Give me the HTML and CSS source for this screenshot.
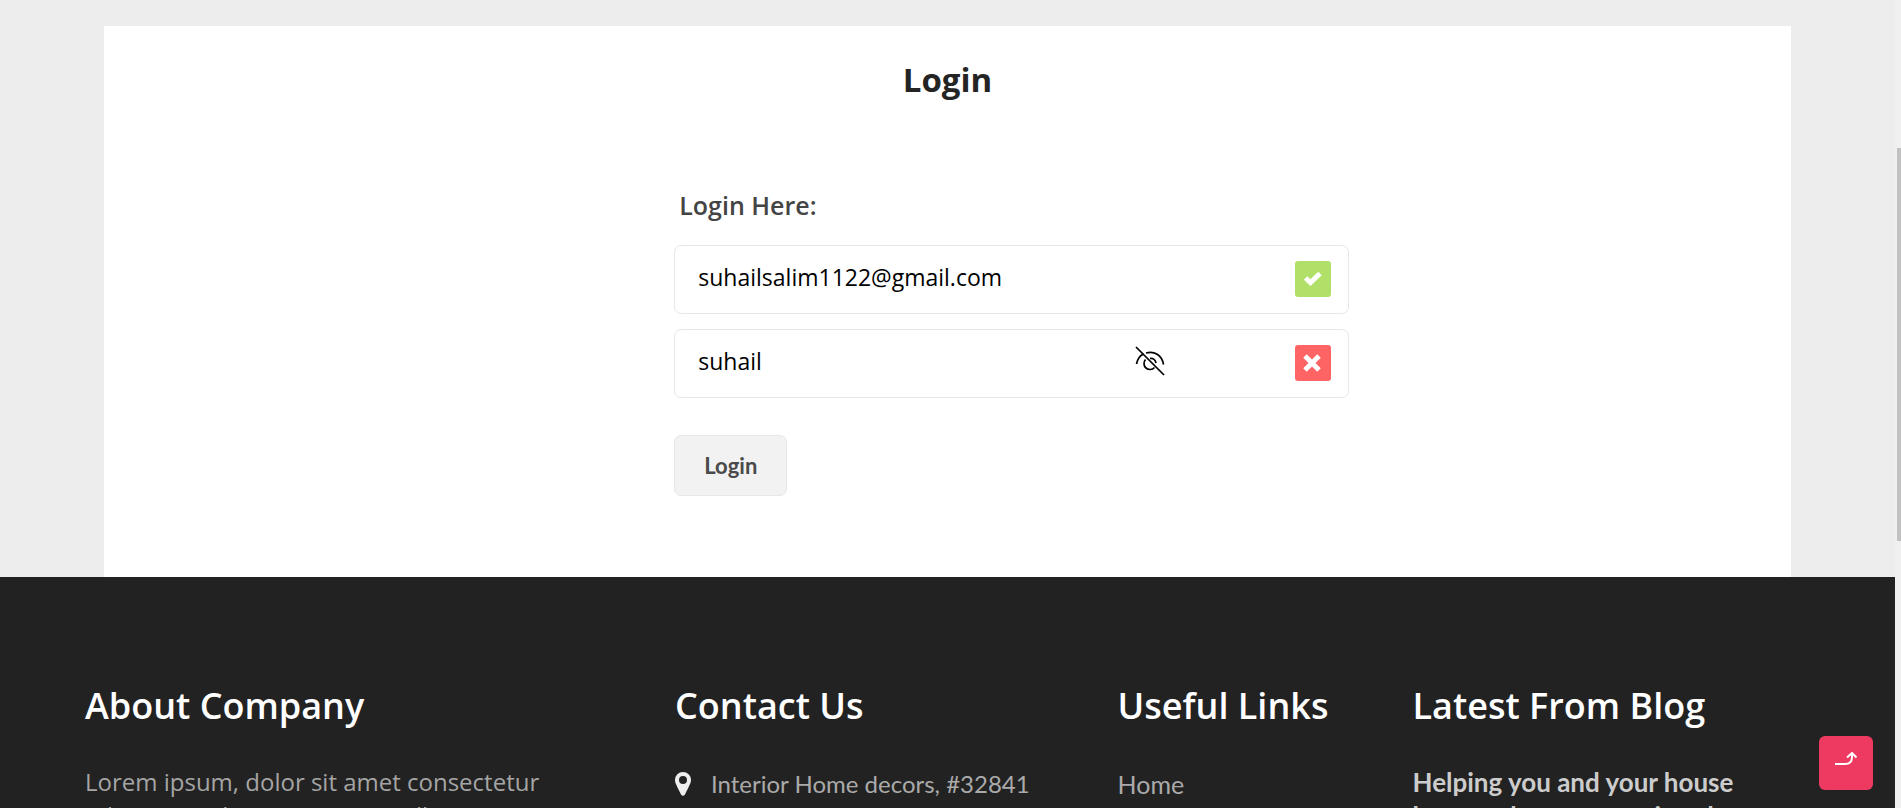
FILE: index.html
```html
<!DOCTYPE html>
<html lang="en">
<head>
<meta charset="utf-8">
<title>Login</title>
<link rel="stylesheet" href="styles.css">
</head>
<body>
<div class="page">
  <main class="main">
    <section class="card">
      <h1 class="card-title">Login</h1>
      <form class="form">
        <h2 class="form-title">Login Here:</h2>
        <div class="field">
          <input class="input" type="email" aria-label="Email" value="suhailsalim1122@gmail.com">
          <svg class="status" viewBox="0 0 36 36" aria-hidden="true"><rect width="36" height="36" rx="3" fill="#b0e068"/><path d="M10.500 17 L15.500 21.500 L25 12.500" fill="none" stroke="#fff" stroke-width="5"/></svg>
        </div>
        <div class="field">
          <input class="input" type="text" aria-label="Password" value="suhail">
          <button class="eye" type="button" aria-label="Hide password"><svg viewBox="0 0 30 30" fill="none" stroke="#000" stroke-width="1.700"><path d="M1 1 L29 29"/><path d="M1.500 18 C2.500 13 5 9.500 8.500 8"/><path d="M11 7 C19 4.500 27 9 28.500 18.500"/><path d="M10.500 13.500 A6 6 0 1 0 19.500 21.500"/><path d="M15 12.500 C18 12 20.500 14 21 17"/></svg></button>
          <svg class="status" viewBox="0 0 36 36" aria-hidden="true"><rect width="36" height="36" rx="3" fill="#ff6464"/><path d="M10 11 L24 25 M24 11 L10 25" fill="none" stroke="#fff" stroke-width="5"/></svg>
        </div>
        <button class="submit" type="submit">Login</button>
      </form>
    </section>
  </main>
  <footer class="footer">
    <section class="col">
      <h2 class="col-title">About Company</h2>
      <p class="about">Lorem ipsum, dolor sit amet consectetur adipisicing elit. Saepe eum nulla, At eos qui</p>
    </section>
    <section class="col">
      <h2 class="col-title">Contact Us</h2>
      <p class="contact"><svg class="pin" viewBox="0 0 16 24" aria-hidden="true"><path fill="#eee" fill-rule="evenodd" d="M8 0 A8 8 0 0 1 16 8 C16 11 14.500 13 10 22.500 Q8 25 6 22.500 C1.500 13 0 11 0 8 A8 8 0 0 1 8 0 Z M8 4 A4 4 0 1 0 8 12 A4 4 0 1 0 8 4 Z"/></svg>Interior Home decors, #32841</p>
    </section>
    <section class="col">
      <h2 class="col-title">Useful Links</h2>
      <a class="link" href="#">Home</a>
    </section>
    <section class="col">
      <h2 class="col-title">Latest From Blog</h2>
      <a class="post" href="#">Helping you and your house become better acquainted</a>
    </section>
  </footer>
  <button class="top" type="button" aria-label="Back to top"><svg viewBox="0 0 22 14" fill="none" stroke="#fff" stroke-width="2"><path d="M0 12 H10 Q17 12 17 5 V1 M12 5.500 L17 1 L21.500 5.500"/></svg></button>
</div>
<div class="scroll"><div class="thumb"></div></div>
</body>
</html>
```

FILE: styles.css
```css
* { box-sizing: border-box; }
body {
  margin: 0;
  height: 100vh;
  display: flex;
  overflow: hidden;
  font-family: "Open Sans", sans-serif;
}
h1, h2, p { margin: 0; }
.page { flex: 1; background: #ededed; overflow: hidden; }
.main { padding-top: 26px; }
.card {
  width: 89%;
  margin: 0 auto;
  padding: 32px 0 81px;
  background: #fff;
}
.card-title {
  font-size: 33px;
  line-height: 44px;
  font-weight: 700;
  color: #242424;
  text-align: center;
}
.form {
  width: 40%;
  margin: 84px 0 0 33.8%;
}
.form-title {
  padding-left: 5px;
  margin-bottom: 21px;
  font-size: 25px;
  line-height: 38px;
  font-weight: 600;
  color: #444;
}
.field { position: relative; margin-bottom: 15px; }
.input {
  display: block;
  width: 100%;
  height: 69px;
  padding: 0 23px 6px;
  border: 1px solid #e8e8e8;
  border-radius: 7px;
  background: #fff;
  font: 400 23px "Open Sans", sans-serif;
  color: #000;
  outline: none;
}
.status { position: absolute; right: 18px; top: 16px; width: 36px; height: 36px; }
.eye {
  position: absolute;
  right: 184px;
  top: 17px;
  width: 30px;
  height: 30px;
  padding: 0;
  border: 0;
  background: none;
}
.eye svg { display: block; }
.submit {
  display: block;
  margin-top: 37px;
  padding: 16px 29px;
  border: 1px solid #e8e8e8;
  border-radius: 7px;
  background: #f2f2f2;
  font: 700 22px/27px Lato, sans-serif;
  color: #4a4a4a;
}
.footer {
  display: grid;
  grid-template-columns: 4fr 3fr 2fr 3fr;
  padding: 104px 40px 60px 85px;
  background: #222;
}
.col-title {
  margin-bottom: 34px;
  font-size: 36px;
  line-height: 50px;
  font-weight: 600;
  color: #fff;
  white-space: nowrap;
}
.about { padding-right: 90px; font-size: 24px; line-height: 34px; color: #a5a5a5; }
.contact { display: flex; align-items: center; gap: 20px; }
.contact, .link, .post {
  font-family: Lato, sans-serif;
  font-size: 25px;
  line-height: 38px;
  color: #aaa;
  text-decoration: none;
}
.contact { font-size: 24px; }
.pin { width: 16px; height: 24px; }
.post { display: block; padding-right: 90px; font-size: 26px; line-height: 34px; font-weight: 700; color: #ccc; }
.top {
  position: fixed;
  right: 28px;
  bottom: 18px;
  width: 54px;
  height: 54px;
  padding: 0 0 6px;
  border: 0;
  border-radius: 6px;
  background: #ee3a60;
}
.top svg { width: 22px; height: 14px; }
.scroll { width: 6px; padding: 148px 0 0 2px; background: #f0f0f0; }
.thumb { height: 393px; background: #c1c1c1; }
```
